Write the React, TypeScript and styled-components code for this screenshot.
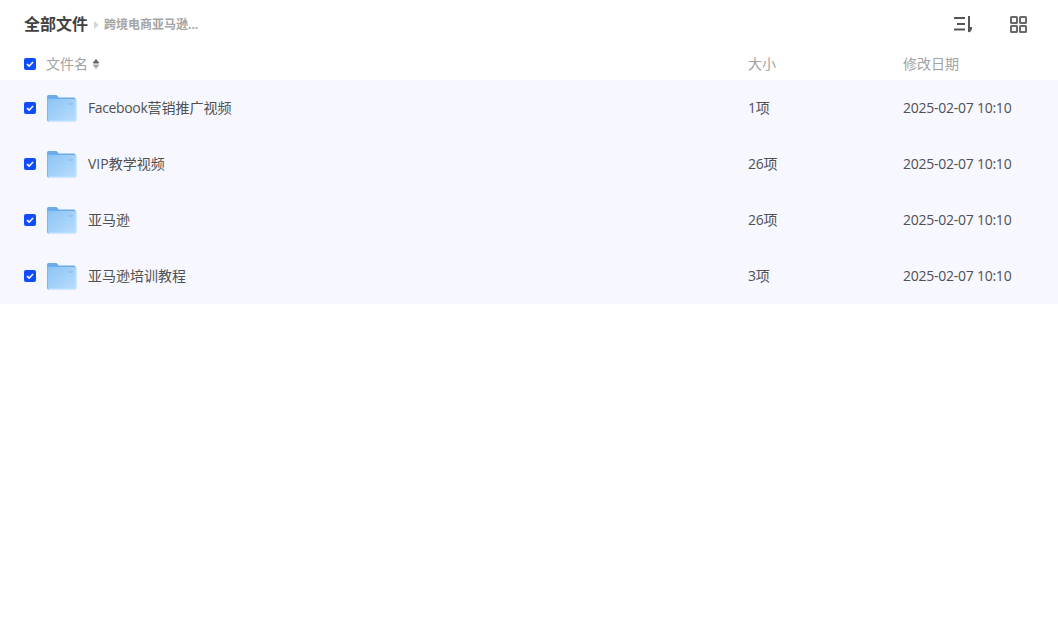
import styled, { createGlobalStyle } from "styled-components";

const GlobalStyle = createGlobalStyle`
    html, body {
        margin: 0;
        padding: 0;
        background: #fff;
        font-family: "Open Sans", "Noto Sans CJK SC", sans-serif;
    }
`;

const Wrapper = styled.div`
    width: 1058px;
    height: 637px;
    overflow: hidden;
`;

const Header = styled.div`
    display: flex;
    align-items: center;
    height: 48px;
    padding: 0 31px 0 24px;
`;

const Crumbs = styled.div`
    display: flex;
    align-items: center;
    flex: 1;
`;

const RootCrumb = styled.span`
    font-size: 16px;
    font-weight: 700;
    line-height: 20px;
    color: #424242;
`;

const CrumbArrow = styled.span`
    width: 0;
    height: 0;
    margin: 1px 5px 0 6px;
    border-left: 5px solid #d6d6d6;
    border-top: 4px solid transparent;
    border-bottom: 4px solid transparent;
`;

const SubCrumb = styled.span`
    margin-top: 2px;
    font-size: 12px;
    font-weight: 700;
    line-height: 20px;
    color: #a5a5a5;
`;

const Tools = styled.div`
    display: flex;
    align-items: center;
    gap: 38px;
`;

const Columns = styled.div`
    display: grid;
    grid-template-columns: 724px 155px 1fr;
    align-items: center;
    height: 32px;
    padding-left: 24px;
    font-size: 14px;
    line-height: 20px;
    color: #a3a3a3;
`;

const Row = styled(Columns)`
    height: 56px;
    background: #f6f7ff;
    color: #505050;
`;

const NameCell = styled.div`
    display: flex;
    align-items: center;
`;

const Label = styled.span<{ $tight?: boolean }>`
    margin-bottom: 1px;
    letter-spacing: ${props => (props.$tight ? "-0.25px" : "normal")};
`;

const Latin = styled.span`
    letter-spacing: -0.37px;
`;

const Check = styled.span`
    display: flex;
    align-items: center;
    justify-content: center;
    width: 12px;
    height: 12px;
    border-radius: 2px;
    background: #0f4cff;
    margin-right: 10px;
`;

const SortMark = styled.svg`
    margin-left: 4px;
`;

const FolderIcon = styled.svg`
    margin-right: 11px;
`;

const rows = [
    { latin: "Facebook", name: "营销推广视频", size: "1项" },
    { latin: "", name: "VIP教学视频", size: "26项" },
    { latin: "", name: "亚马逊", size: "26项" },
    { latin: "", name: "亚马逊培训教程", size: "3项" },
];

const date = "2025-02-07 10:10";

function Tick() {
    return (
        <Check>
            <svg width="12" height="12" viewBox="0 0 12 12">
                <path d="M3 6.2 5.1 8.2 9 4" fill="none" stroke="#fff" strokeWidth="1.6" />
            </svg>
        </Check>
    );
}

function Folder({ id }: { id: string }) {
    return (
        <FolderIcon width="31" height="28" viewBox="0 0 31 28">
            <defs>
                <linearGradient id={id} x1="0" y1="0" x2="1" y2="1">
                    <stop offset="0" stopColor="#8ac3f5" />
                    <stop offset="1" stopColor="#b9defd" />
                </linearGradient>
            </defs>
            <path d="M1 2.500a1.500 1.500 0 0 1 1.500-1.500h8l2.500 2.500h15a1.500 1.500 0 0 1 1.500 1.500V10H1z" fill="#6cace8" />
            <path d="M1 5h28a1.500 1.500 0 0 1 1.500 1.500V26a1.500 1.500 0 0 1-1.500 1.500H2.500A1.500 1.500 0 0 1 1 26z" fill={`url(#${id})`} />
            <path d="M1.500 5v21a1 1 0 0 0 1 1" fill="none" stroke="#7ab8f0" />
            <path d="M30 7v19a1 1 0 0 1-1 1H3" fill="none" stroke="#c8e4fe" />
            <rect x="23" y="9" width="4" height="2" fill="#8fc2f1" />
        </FolderIcon>
    );
}

function App() {
    return (
        <Wrapper>
            <GlobalStyle />
            <Header>
                <Crumbs>
                    <RootCrumb>全部文件</RootCrumb>
                    <CrumbArrow />
                    <SubCrumb>跨境电商亚马逊...</SubCrumb>
                </Crumbs>
                <Tools>
                    <svg width="18" height="18" viewBox="0 0 18 18">
                        <path d="M0 3h11M3 9h8M0 14.500h11" stroke="#555" strokeWidth="2" fill="none" />
                        <path d="M15 1v16M15 17l2.500-4h-2.500" stroke="#555" strokeWidth="2" fill="none" />
                    </svg>
                    <svg width="17" height="17" viewBox="0 0 17 17" fill="#fafafa" stroke="#6a6a6a" strokeWidth="2">
                        <rect x="1" y="1" width="6" height="6" rx="0.5" />
                        <rect x="10" y="1" width="6" height="6" rx="0.5" />
                        <rect x="1" y="10" width="6" height="6" rx="0.5" />
                        <rect x="10" y="10" width="6" height="6" rx="0.5" />
                    </svg>
                </Tools>
            </Header>
            <Columns>
                <NameCell>
                    <Tick />
                    <Label>文件名</Label>
                    <SortMark width="8" height="12" viewBox="0 0 8 12">
                        <path d="M4 1.500 6.800 5H1.200z" fill="#666" stroke="#666" strokeLinejoin="round" />
                        <path d="M4 10.500 1.200 7h5.600z" fill="#aaa" stroke="#aaa" strokeLinejoin="round" />
                    </SortMark>
                </NameCell>
                <Label>大小</Label>
                <Label>修改日期</Label>
            </Columns>
            {rows.map((row, i) => (
                <Row key={row.name}>
                    <NameCell>
                        <Tick />
                        <Folder id={`folder-fill-${i}`} />
                        <Label>
                            {row.latin && <Latin>{row.latin}</Latin>}
                            {row.name}
                        </Label>
                    </NameCell>
                    <Label $tight>{row.size}</Label>
                    <Label $tight>{date}</Label>
                </Row>
            ))}
        </Wrapper>
    );
}

export default App;
